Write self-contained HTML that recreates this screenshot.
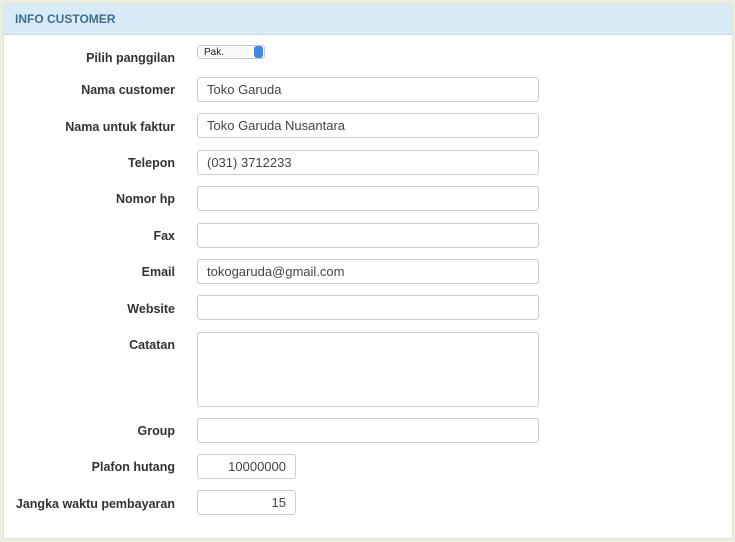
<!DOCTYPE html>
<html><head><style>
body{margin:0;background:#eceee0;font-family:"Liberation Sans",Arial,sans-serif;}
.panel{position:absolute;left:3px;top:3px;width:728px;height:534px;background:#fff;border:1px solid #dde3d2;border-radius:3px;overflow:hidden}
.hd{height:30px;background:#d9ebf6;border-bottom:1px solid #c7dde9;color:#3a6e95;font-weight:bold;font-size:12px;line-height:30px;padding-left:11px}
.l{position:absolute;right:557px;font-size:12.5px;font-weight:bold;color:#333;text-align:right;white-space:nowrap}
.i{position:absolute;left:193px;height:23px;border:1px solid #ccc;border-radius:3px;font-size:13px;color:#444;line-height:23px;padding-left:9px;box-sizing:content-box;width:331px}
.s{position:absolute;left:193px;top:41px;width:68px;height:14px;border:1px solid #c8c8c8;border-radius:3px;font-size:10px;line-height:13px;padding-left:6px;box-sizing:border-box;color:#222;background:#fafafa}
.s b{position:absolute;right:1px;top:0px;width:9px;height:12px;background:#3b88e8;border-radius:3px}
.n{width:88px;padding:0 9px 0 0;text-align:right}
</style></head><body>
<div class="panel">
<div class="hd">INFO CUSTOMER</div>
<div class="l" style="top:47px">Pilih panggilan</div>
<div class="s">Pak.<b></b></div>
<div class="l" style="top:79px">Nama customer</div><div class="i" style="top:73px">Toko Garuda</div>
<div class="l" style="top:116px">Nama untuk faktur</div><div class="i" style="top:109px">Toko Garuda Nusantara</div>
<div class="l" style="top:152px">Telepon</div><div class="i" style="top:146px">(031) 3712233</div>
<div class="l" style="top:188px">Nomor hp</div><div class="i" style="top:182px"></div>
<div class="l" style="top:225px">Fax</div><div class="i" style="top:219px"></div>
<div class="l" style="top:261px">Email</div><div class="i" style="top:255px">tokogaruda@gmail.com</div>
<div class="l" style="top:298px">Website</div><div class="i" style="top:291px"></div>
<div class="l" style="top:334px">Catatan</div><div class="i" style="top:328px;height:73px"></div>
<div class="l" style="top:420px">Group</div><div class="i" style="top:414px"></div>
<div class="l" style="top:456px">Plafon hutang</div><div class="i n" style="top:450px">10000000</div>
<div class="l" style="top:493px">Jangka waktu pembayaran</div><div class="i n" style="top:486px">15</div>
</div>
</body></html>
